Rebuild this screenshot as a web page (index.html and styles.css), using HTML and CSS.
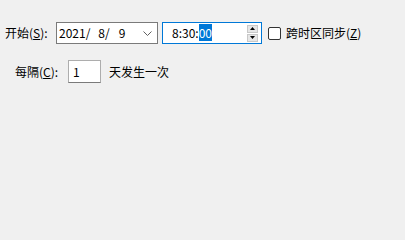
FILE: index.html
```html
<!DOCTYPE html>
<html>
<head>
<meta charset="utf-8">
<link rel="stylesheet" href="styles.css">
</head>
<body>
<div class="page">
  <div class="row row-start">
    <span class="label label-start">开始(<u>S</u>):</span>
    <div class="field date">
      <span class="date-text"><span>2021/</span><span class="dmonth">8/</span><span class="dday">9</span></span>
      <svg class="chevron" width="9" height="5" viewBox="0 0 9 5"><polyline points="0.5,0.5 4.5,4.5 8.5,0.5" fill="none" stroke="#606060" stroke-width="1"/></svg>
    </div>
    <div class="field time">
      <span class="time-text">8:30:<span class="sel">00</span></span>
      <div class="spin">
        <div class="spin-btn"><svg width="5" height="3" viewBox="0 0 5 3"><polygon points="2.5,0 5,3 0,3" fill="#000"/></svg></div>
        <div class="spin-btn"><svg width="5" height="3" viewBox="0 0 5 3"><polygon points="0,0 5,0 2.5,3" fill="#000"/></svg></div>
      </div>
    </div>
    <span class="check"></span>
    <span class="label check-label">跨时区同步(<u>Z</u>)</span>
  </div>
  <div class="row row-every">
    <span class="label label-every">每隔(<u>C</u>):</span>
    <div class="field num"><span>1</span></div>
    <span class="label unit">天发生一次</span>
  </div>
</div>
</body>
</html>
```
FILE: styles.css
```css
html, body {
  margin: 0;
  padding: 0;
  background: #f0f0f0;
}
body {
  width: 405px;
  height: 225px;
  overflow: hidden;
  font-family: "Noto Sans CJK SC", "Noto Sans", sans-serif;
  font-size: 12px;
  color: #000;
}
.page {
  display: flex;
  flex-direction: column;
}
.row {
  display: flex;
  align-items: center;
}
.row-start {
  margin-top: 22px;
  padding-left: 5px;
  height: 22px;
}
.label {
  white-space: nowrap;
  line-height: 16px;
}
.label u {
  text-underline-offset: 1px;
}
.label-start {
  width: 51px;
}
.field {
  box-sizing: border-box;
  height: 22px;
  background: #fff;
  display: flex;
  align-items: center;
}
.date {
  width: 102px;
  border: 1px solid #7a7a7a;
  padding-left: 2px;
  justify-content: space-between;
  padding-right: 5px;
}
.date-text, .time-text {
  white-space: pre;
  line-height: 16px;
}
.dmonth {
  margin-left: 8px;
}
.dday {
  margin-left: 9px;
}
.chevron {
  display: block;
}
.time {
  width: 100px;
  margin-left: 4px;
  border: 1px solid #0078d7;
  padding-left: 9px;
  padding-right: 3px;
  justify-content: space-between;
}
.sel {
  background: #0078d7;
  color: #fff;
}
.spin {
  display: flex;
  flex-direction: column;
  gap: 1px;
  width: 11px;
  height: 17px;
}
.spin-btn {
  flex: 1;
  background: #e6e6e6;
  border: 1px solid #c8c8c8;
  display: flex;
  align-items: center;
  justify-content: center;
}
.spin-btn svg {
  display: block;
}
.check {
  box-sizing: border-box;
  width: 13px;
  height: 13px;
  margin-left: 6px;
  border: 1px solid #333;
  border-radius: 2px;
  background: #fff;
}
.check-label {
  margin-left: 5px;
}
.row-every {
  margin-top: 16px;
  padding-left: 15px;
  height: 23px;
}
.label-every {
  width: 53px;
}
.num {
  width: 33px;
  height: 23px;
  border: 1px solid #adadad;
  border-bottom-color: #7a7a7a;
  padding-left: 4px;
}
.unit {
  margin-left: 8px;
}
```
